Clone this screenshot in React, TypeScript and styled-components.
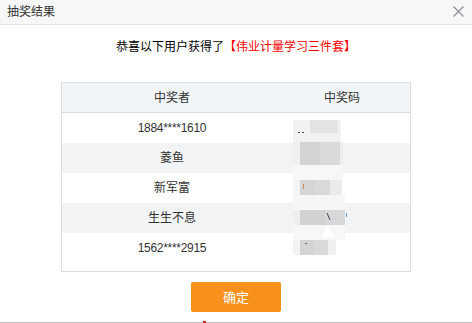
import React from "react";
import styled, { createGlobalStyle } from "styled-components";

const GlobalStyle = createGlobalStyle`
  html, body { margin: 0; padding: 0; background: #ffffff; }
  body {
    font-family: "Noto Sans", "Noto Sans CJK SC", sans-serif;
    font-size: 12px;
    color: #333;
  }
  * { box-sizing: border-box; }
`;

const Dialog = styled.div`
  width: 472px;
  height: 323px;
  display: flex;
  flex-direction: column;
  background: #fff;
  overflow: hidden;
`;

const Header = styled.div`
  height: 25px;
  flex: none;
  display: flex;
  align-items: center;
  justify-content: space-between;
  padding: 0 7px 1px 7px;
  background: #f7f7f7;
  border-bottom: 1px solid #e3e3e3;
`;

const Title = styled.div`
  font-size: 12px;
  line-height: 24px;
  color: #333;
`;

const CloseButton = styled.div`
  width: 12px;
  height: 12px;
  margin-right: 1px;
  display: flex;
  align-items: center;
  justify-content: center;
`;

const Congrats = styled.div`
  margin-top: 12px;
  text-align: center;
  font-size: 12px;
  line-height: 20px;
  color: #000;
`;

const Prize = styled.span`
  color: #ff0000;
`;

const TableWrap = styled.div`
  position: relative;
  margin: 25px auto 0;
  width: 350px;
  height: 190px;
  border: 1px solid #dcdcdc;
  padding-bottom: 8px;
`;

const Row = styled.div<{ $bg: string; $head?: boolean }>`
  display: grid;
  grid-template-columns: 220px 1fr;
  height: 30px;
  background: ${(p) => p.$bg};
  border-bottom: ${(p) => (p.$head ? "1px solid #dcdcdc" : "none")};
`;

const Cell = styled.div<{ $shift?: number; $num?: boolean }>`
  display: flex;
  align-items: center;
  justify-content: center;
  font-family: ${(p) =>
    p.$num ? '"Liberation Sans", "Noto Sans CJK SC", sans-serif' : '"Noto Sans", "Noto Sans CJK SC", sans-serif'};
  letter-spacing: ${(p) => (p.$num ? "-0.3px" : "0")};
  font-size: 12px;
  line-height: 16px;
  color: #333;
  padding-right: ${(p) => p.$shift ?? 0}px;
`;

const Mosaic = styled.svg`
  position: absolute;
  left: 230px;
  top: 36px;
  width: 56px;
  height: 140px;
`;

const Footer = styled.div`
  margin-top: 10px;
  display: flex;
  justify-content: center;
`;

const ConfirmButton = styled.button`
  width: 90px;
  height: 30px;
  border: none;
  border-radius: 2px;
  background: #f7911b;
  color: #fff;
  font-family: "Noto Sans CJK SC", sans-serif;
  font-size: 13px;
  line-height: 30px;
  padding: 0;
  cursor: pointer;
`;

const BottomEdge = styled.div`
  position: relative;
  margin-top: auto;
  height: 1px;
  background: #bdbdb5;
`;

const RedTick = styled.div`
  position: absolute;
  left: 203px;
  top: -1px;
  width: 3px;
  height: 2px;
  background: #e02020;
`;

const rows = [
  { name: "1884****1610", num: true },
  { name: "菱鱼", num: false },
  { name: "新军富", num: false },
  { name: "生生不息", num: false },
  { name: "1562****2915", num: true },
];

export default function App() {
  return (
    <>
      <GlobalStyle />
      <Dialog>
        <Header>
          <Title>抽奖结果</Title>
          <CloseButton>
            <svg width="11" height="11" viewBox="0 0 11 11">
              <path d="M0.5 0.5 L10.5 10.5 M10.5 0.5 L0.5 10.5" stroke="#8a8f96" strokeWidth="1.2" />
            </svg>
          </CloseButton>
        </Header>
        <Congrats>
          恭喜以下用户获得了<Prize>【伟业计量学习三件套】</Prize>
        </Congrats>
        <TableWrap>
          <Row $bg="#f2f5f7" $head>
            <Cell>中奖者</Cell>
            <Cell $shift={8}>中奖码</Cell>
          </Row>
          {rows.map((r, i) => (
            <Row key={i} $bg={i % 2 === 1 ? "#f2f3f5" : "#ffffff"}>
              <Cell $num={r.num}>{r.name}</Cell>
              <Cell />
            </Row>
          ))}
          <Mosaic viewBox="292 119 56 140">
            <rect x="293" y="120" width="48" height="22" fill="#f2f2f2" />
            <rect x="310" y="120" width="28" height="13" fill="#e3e3e5" />
            <rect x="298" y="132" width="2" height="1" fill="#444" />
            <rect x="302" y="132" width="2" height="1" fill="#444" />
            <rect x="293" y="142" width="7" height="23" fill="#f0f0f0" />
            <rect x="300" y="142" width="20" height="23" fill="#d3d3d5" />
            <rect x="320" y="142" width="20" height="23" fill="#dadadc" />
            <rect x="340" y="142" width="3" height="23" fill="#eeeeee" />
            <rect x="293" y="165" width="50" height="15" fill="#f7f7f7" />
            <rect x="293" y="180" width="7" height="15" fill="#f4f4f4" />
            <rect x="300" y="180" width="15" height="15" fill="#d5d5d7" />
            <rect x="315" y="180" width="15" height="15" fill="#d9d9db" />
            <rect x="330" y="180" width="12" height="15" fill="#ebebeb" />
            <rect x="303" y="184" width="1" height="5" fill="#c98a5a" />
            <rect x="293" y="195" width="52" height="15" fill="#f6f6f6" />
            <rect x="293" y="210" width="7" height="15" fill="#eeeeee" />
            <rect x="300" y="210" width="25" height="15" fill="#d2d2d4" />
            <rect x="325" y="210" width="20" height="15" fill="#d8d8da" />
            <path d="M327 213 L330 220" stroke="#445" strokeWidth="1" />
            <rect x="346" y="213" width="1" height="4" fill="#5aa0e0" />
            <rect x="293" y="225" width="52" height="15" fill="#f7f7f7" />
            <path d="M326 225 L322 238 L336 238 Z" fill="#ffffff" />
            <rect x="293" y="240" width="7" height="15" fill="#f3f3f3" />
            <rect x="300" y="240" width="15" height="15" fill="#d4d4d6" />
            <rect x="315" y="240" width="13" height="15" fill="#d9d9db" />
            <rect x="328" y="240" width="8" height="15" fill="#f0f0f0" />
            <rect x="305" y="243" width="2" height="1" fill="#666" />
          </Mosaic>
        </TableWrap>
        <Footer>
          <ConfirmButton>确定</ConfirmButton>
        </Footer>
        <BottomEdge>
          <RedTick />
        </BottomEdge>
      </Dialog>
    </>
  );
}
